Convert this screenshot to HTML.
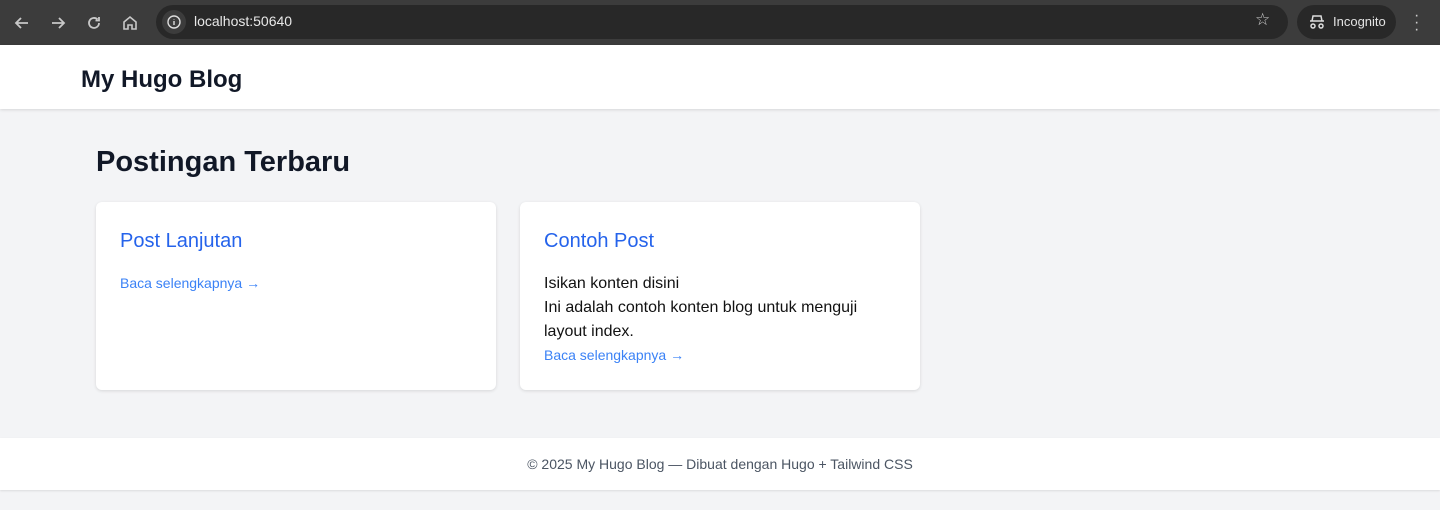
<!DOCTYPE html>
<html><head><style>
*{margin:0;padding:0;box-sizing:border-box}
body{width:1440px;height:510px;background:#f3f4f6;font-family:"Liberation Sans",sans-serif;position:relative;overflow:hidden}
.chrome{position:absolute;top:0;left:0;width:1440px;height:45px;background:#3c3c3c}
.url{position:absolute;left:156px;top:5px;width:1132px;height:34px;border-radius:17px;background:#282828}
.info{position:absolute;left:162px;top:10px;width:24px;height:24px;border-radius:12px;background:#3c3c3c}
.ic{position:absolute;color:#c8c8c8}
.inc{position:absolute;left:1297px;top:5px;width:99px;height:34px;border-radius:17px;background:#282828;color:#e3e3e3;font-size:13px;line-height:34px;padding-left:36px}
header{position:absolute;top:45px;left:0;width:1440px;height:64px;background:#fff;box-shadow:0 1px 3px rgba(0,0,0,.12)}
header h1{position:absolute;left:81px;top:21px;font-size:24px;font-weight:bold;color:#111827}
h2{position:absolute;left:96px;top:146px;font-size:29px;font-weight:bold;color:#111827}
.card{position:absolute;top:202px;width:400px;height:188px;background:#fff;border-radius:6px;box-shadow:0 1px 3px rgba(0,0,0,.12);padding:26px 24px}
.card h3{font-size:20px;font-weight:normal;color:#2563eb;margin-bottom:18px;line-height:26px}
.card p{font-size:16px;line-height:24px;color:#111}
.card a{font-size:14px;color:#3b82f6;line-height:22px;display:block}
footer{position:absolute;top:438px;left:0;width:1440px;height:52px;background:#fff;box-shadow:0 1px 2px rgba(0,0,0,.1);text-align:center;font-size:14px;color:#4b5563;line-height:52px}
</style></head><body>
<div class="chrome">
<svg class="ic" style="left:12px;top:13px" width="20" height="20" viewBox="0 0 20 20" fill="none" stroke="#c8c8c8" stroke-width="1.8"><path d="M16 10H4M9 5l-5 5 5 5"/></svg>
<svg class="ic" style="left:48px;top:13px" width="20" height="20" viewBox="0 0 20 20" fill="none" stroke="#c8c8c8" stroke-width="1.8"><path d="M4 10h12M11 5l5 5-5 5"/></svg>
<svg class="ic" style="left:84px;top:13px" width="20" height="20" viewBox="0 0 20 20" fill="none" stroke="#c8c8c8" stroke-width="1.8"><path d="M15 10a5 5 0 1 1-1.5-3.6M15 4v3.5h-3.5"/></svg>
<svg class="ic" style="left:120px;top:13px" width="20" height="20" viewBox="0 0 20 20" fill="none" stroke="#c8c8c8" stroke-width="1.6"><path d="M4 9l6-5 6 5v7h-4v-4H8v4H4z"/></svg>
<div class="url"></div><div class="info"></div>
<svg class="ic" style="left:166px;top:14px" width="16" height="16" viewBox="0 0 16 16" fill="none" stroke="#ddd" stroke-width="1.4"><circle cx="8" cy="8" r="6"/><path d="M8 7v4M8 5v.5"/></svg>
<div style="position:absolute;left:194px;top:13px;color:#e8e8e8;font-size:14px">localhost:50640</div>
<div style="position:absolute;left:1255px;top:10px;color:#ccc;font-size:17px">☆</div>
<div class="inc">Incognito</div>
<svg class="ic" style="left:1308px;top:14px" width="18" height="16" viewBox="0 0 18 16" fill="none" stroke="#ddd" stroke-width="1.5"><path d="M5 2h8l1 5H4zM2 7h14"/><circle cx="5" cy="12" r="2"/><circle cx="13" cy="12" r="2"/></svg>
<div style="position:absolute;left:1414px;top:12px;color:#ccc;font-size:16px;line-height:7px">·<br>·<br>·</div>
</div>
<header><h1>My Hugo Blog</h1></header>
<h2>Postingan Terbaru</h2>
<div class="card" style="left:96px"><h3>Post Lanjutan</h3><a>Baca selengkapnya →</a></div>
<div class="card" style="left:520px"><h3>Contoh Post</h3><p>Isikan konten disini<br>Ini adalah contoh konten blog untuk menguji layout index.</p><a>Baca selengkapnya →</a></div>
<footer>© 2025 My Hugo Blog — Dibuat dengan Hugo + Tailwind CSS</footer>
</body></html>
